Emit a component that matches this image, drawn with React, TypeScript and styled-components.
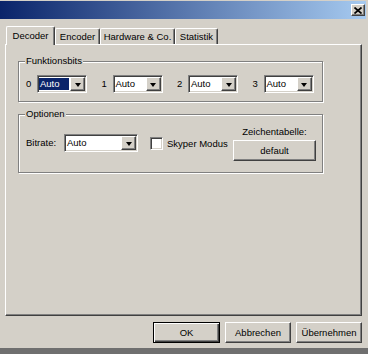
import React from "react"
import styled, { createGlobalStyle, css } from "styled-components"

const GlobalStyle = createGlobalStyle`
  html, body {
    margin: 0;
    padding: 0;
    background: #d4d0c8;
  }
  body {
    font-family: "Liberation Sans", Arial, sans-serif;
    font-size: 9.5px;
    color: #000;
  }
`

const raised = css`
  border: 1px solid;
  border-color: #ffffff #404040 #404040 #ffffff;
  box-shadow: inset -1px -1px 0 #808080, inset 1px 1px 0 #d4d0c8;
`

const sunken = css`
  border: 1px solid;
  border-color: #808080 #ffffff #ffffff #808080;
  box-shadow: inset 1px 1px 0 #404040, inset -1px -1px 0 #d4d0c8;
`

const Window = styled.div`
  width: 368px;
  height: 354px;
  box-sizing: border-box;
  padding-top: 1px;
  background: #d4d0c8;
  border-bottom: 6px solid #6f6f6f;
  display: flex;
  flex-direction: column;
`

const TitleBar = styled.div`
  height: 18px;
  margin-right: 2px;
  background: linear-gradient(to right, #0a246a, #a6caf0);
  display: flex;
  align-items: center;
  justify-content: flex-end;
  padding-right: 1px;
`

const CloseButton = styled.div`
  width: 14px;
  height: 12px;
  box-sizing: border-box;
  background: #d4d0c8;
  ${raised};
  display: flex;
  align-items: center;
  justify-content: center;
`

const TabStrip = styled.div`
  display: flex;
  align-items: flex-end;
  height: 18px;
  margin-top: 7px;
  padding-left: 6px;
  position: relative;
  z-index: 1;
`

const Tab = styled.div<{ $active?: boolean; $w: number }>`
  width: ${(p) => p.$w}px;
  box-sizing: border-box;
  height: ${(p) => (p.$active ? 19 : 16)}px;
  margin-bottom: ${(p) => (p.$active ? -1 : 0)}px;
  background: #d4d0c8;
  border-top: 1px solid #ffffff;
  border-left: 1px solid #ffffff;
  border-right: 1px solid #404040;
  box-shadow: inset -1px 0 0 #808080;
  border-radius: 2px 2px 0 0;
  display: flex;
  align-items: ${(p) => (p.$active ? "flex-start" : "center")};
  padding-top: ${(p) => (p.$active ? 3 : 0)}px;
  justify-content: center;
  line-height: 12px;
`

const Panel = styled.div`
  margin-left: 5px;
  width: 357px;
  height: 272px;
  box-sizing: border-box;
  border-top: 1px solid #ffffff;
  border-left: 1px solid #ffffff;
  border-right: 1px solid #404040;
  border-bottom: 1px solid #404040;
  box-shadow: inset -1px -1px 0 #808080;
  padding: 16px 0 0 12px;
  display: flex;
  flex-direction: column;
  gap: 12px;
`

const Group = styled.div<{ $pt: number; $pb: number }>`
  position: relative;
  width: 305px;
  box-sizing: border-box;
  border: 1px solid #808080;
  box-shadow: inset 1px 1px 0 #ffffff, 1px 1px 0 #ffffff;
  padding: ${(p) => p.$pt}px 6px ${(p) => p.$pb}px 7px;
`

const Legend = styled.span`
  position: absolute;
  top: -7px;
  left: 6px;
  padding: 0 1px;
  line-height: 12px;
  background: #d4d0c8;
`

const BitsRow = styled.div`
  display: flex;
  gap: 14.5px;
`

const BitItem = styled.div`
  display: flex;
  align-items: center;
  gap: 5px;
`

const BitLabel = styled.span`
  width: 6px;
  line-height: 12px;
`

const ComboBox = styled.div<{ $w: number }>`
  width: ${(p) => p.$w}px;
  height: 18px;
  box-sizing: border-box;
  background: #ffffff;
  ${sunken};
  padding: 1px;
  display: flex;
`

const ComboText = styled.div<{ $focused?: boolean }>`
  flex: 1;
  margin: 1px 1px 1px 0;
  padding-left: 1px;
  line-height: 12px;
  background: ${(p) => (p.$focused ? "#0a246a" : "transparent")};
  color: ${(p) => (p.$focused ? "#ffffff" : "#000000")};
`

const ComboArrow = styled.div`
  width: 15px;
  height: 14px;
  box-sizing: border-box;
  background: #d4d0c8;
  ${raised};
  display: flex;
  align-items: center;
  justify-content: center;

  &::after {
    content: "";
    border-left: 3.5px solid transparent;
    border-right: 3.5px solid transparent;
    border-top: 4px solid #000;
    margin-top: 1px;
  }
`

const OptionsRow = styled.div`
  display: flex;
  align-items: flex-start;
`

const OptionsLeft = styled.div`
  display: flex;
  align-items: center;
  margin-top: 8px;
`

const FieldLabel = styled.span`
  width: 38px;
  line-height: 12px;
`

const CheckBox = styled.div`
  width: 13px;
  height: 13px;
  box-sizing: border-box;
  background: #ffffff;
  ${sunken};
  margin-left: 12px;
  margin-right: 4px;
`

const CharsetColumn = styled.div`
  margin-left: auto;
  width: 83px;
  display: flex;
  flex-direction: column;
  align-items: center;
  gap: 2px;
`

const ColumnLabel = styled.span`
  line-height: 12px;
`

const PushButton = styled.div<{ $w: number; $default?: boolean }>`
  width: ${(p) => p.$w}px;
  height: 21px;
  box-sizing: border-box;
  background: #d4d0c8;
  display: flex;
  align-items: center;
  justify-content: center;
  line-height: 12px;
  ${(p) =>
    p.$default
      ? css`
          border: 1px solid #000000;
          box-shadow: inset 1px 1px 0 #ffffff, inset -1px -1px 0 #404040,
            inset -2px -2px 0 #808080;
        `
      : raised};
`

const ButtonBar = styled.div`
  display: flex;
  justify-content: flex-end;
  gap: 5px;
  margin-top: 6px;
  padding-right: 6px;
`

const Combo: React.FC<{ w: number; focused?: boolean }> = ({ w, focused }) => (
  <ComboBox $w={w}>
    <ComboText $focused={focused}>Auto</ComboText>
    <ComboArrow />
  </ComboBox>
)

export default function App() {
  return (
    <>
      <GlobalStyle />
      <Window>
        <TitleBar>
          <CloseButton>
            <svg width="8" height="7" viewBox="0 0 8 7">
              <path d="M0.5 0.5 L7.5 6.5 M7.5 0.5 L0.5 6.5" stroke="#000" strokeWidth="1.7" />
            </svg>
          </CloseButton>
        </TitleBar>

        <TabStrip>
          <Tab $active $w={49}>Decoder</Tab>
          <Tab $w={45}>Encoder</Tab>
          <Tab $w={75}>Hardware &amp; Co.</Tab>
          <Tab $w={43}>Statistik</Tab>
        </TabStrip>

        <Panel>
          <Group $pt={13} $pb={8}>
            <Legend>Funktionsbits</Legend>
            <BitsRow>
              {["0", "1", "2", "3"].map((n, i) => (
                <BitItem key={n}>
                  <BitLabel>{n}</BitLabel>
                  <Combo w={50} focused={i === 0} />
                </BitItem>
              ))}
            </BitsRow>
          </Group>

          <Group $pt={11} $pb={11}>
            <Legend>Optionen</Legend>
            <OptionsRow>
              <OptionsLeft>
                <FieldLabel>Bitrate:</FieldLabel>
                <Combo w={74} />
                <CheckBox />
                <span>Skyper Modus</span>
              </OptionsLeft>
              <CharsetColumn>
                <ColumnLabel>Zeichentabelle:</ColumnLabel>
                <PushButton $w={83}>default</PushButton>
              </CharsetColumn>
            </OptionsRow>
          </Group>
        </Panel>

        <ButtonBar>
          <PushButton $w={67} $default>OK</PushButton>
          <PushButton $w={66}>Abbrechen</PushButton>
          <PushButton $w={66}>Übernehmen</PushButton>
        </ButtonBar>
      </Window>
    </>
  )
}
